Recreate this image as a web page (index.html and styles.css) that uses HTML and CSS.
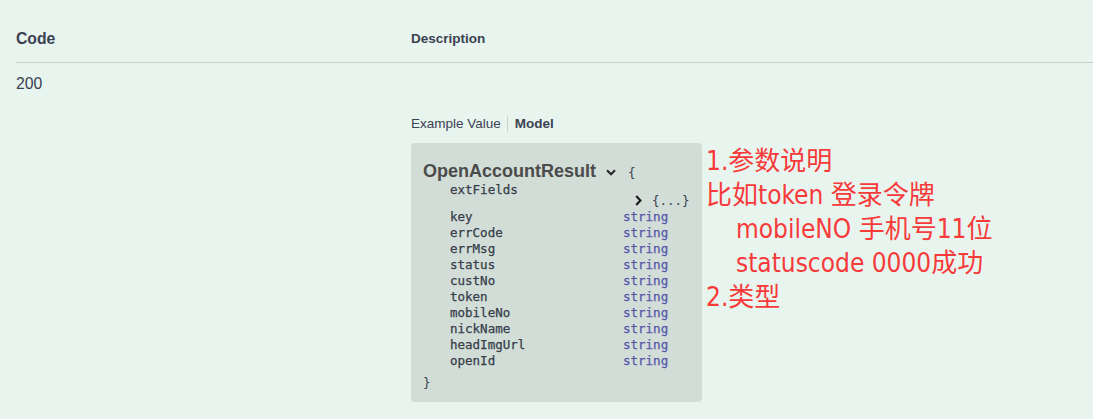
FILE: index.html
```html
<!DOCTYPE html>
<html lang="zh-CN">
<head>
<meta charset="utf-8">
<title>Responses</title>
<link rel="stylesheet" href="styles.css">
</head>
<body>
<div class="responses">
  <div class="resp-head">
    <div class="col-code head-code">Code</div>
    <div class="col-desc head-desc">Description</div>
  </div>
  <div class="resp-row">
    <div class="col-code code-val">200</div>
    <div class="col-desc">
      <div class="tabs">
        <span class="tab">Example Value</span>
        <span class="tab tab-active">Model</span>
      </div>
      <div class="model-wrap">
        <div class="model-box">
          <div class="model-title">
            <span class="title-text">OpenAccountResult</span>
            <svg class="chev-down" width="10" height="7" viewBox="0 0 10 7"><polyline points="1,1.2 5,5.2 9,1.2" fill="none" stroke="#2b2b2b" stroke-width="2.2"/></svg>
            <span class="brace">{</span>
          </div>
          <div class="props">
            <div class="pname pname-tall">extFields</div>
            <div class="ptype ptype-tall">
              <svg class="chev-right" width="7" height="11" viewBox="0 0 7 11"><polyline points="1.2,1 5.4,5.5 1.2,10" fill="none" stroke="#1e1e1e" stroke-width="2.2"/></svg>
              <span class="brace">{...}</span>
            </div>
            <div class="pname">key</div><div class="ptype">string</div>
            <div class="pname">errCode</div><div class="ptype">string</div>
            <div class="pname">errMsg</div><div class="ptype">string</div>
            <div class="pname">status</div><div class="ptype">string</div>
            <div class="pname">custNo</div><div class="ptype">string</div>
            <div class="pname">token</div><div class="ptype">string</div>
            <div class="pname">mobileNo</div><div class="ptype">string</div>
            <div class="pname">nickName</div><div class="ptype">string</div>
            <div class="pname">headImgUrl</div><div class="ptype">string</div>
            <div class="pname">openId</div><div class="ptype">string</div>
          </div>
          <div class="close-brace">}</div>
        </div>
        <div class="notes">
          <div class="note">1.参数说明</div>
          <div class="note">比如token 登录令牌</div>
          <div class="note note-indent">mobileNO 手机号11位</div>
          <div class="note note-indent">statuscode 0000成功</div>
          <div class="note">2.类型</div>
        </div>
      </div>
    </div>
  </div>
</div>
</body>
</html>
```

FILE: styles.css
```css
html, body {
  margin: 0;
  padding: 0;
  background: #e8f5ef;
}
body {
  width: 1093px;
  height: 419px;
  overflow: hidden;
  font-family: "Liberation Sans", Arial, sans-serif;
  color: #3b4151;
}
.responses {
  margin-left: 16px;
}
.resp-head {
  display: flex;
  padding: 27px 0 11px;
  line-height: 24px;
  border-bottom: 1px solid #c5d0cc;
}
.col-code {
  width: 395px;
  flex: none;
}
.col-desc {
  flex: 1;
}
.head-code {
  font-size: 15.75px;
  font-weight: bold;
}
.head-desc {
  font-size: 13.5px;
  font-weight: bold;
}
.resp-row {
  display: flex;
  padding-top: 9px;
}
.code-val {
  font-size: 15.75px;
  line-height: 24px;
}
.tabs {
  margin-top: 41.5px;
  font-size: 13.5px;
  line-height: 20px;
  display: flex;
  align-items: center;
}
.tab-active {
  font-weight: bold;
  margin-left: 6px;
  padding-left: 7px;
  border-left: 1px solid #c9d3cf;
  line-height: 16px;
}
.model-wrap {
  margin-top: 9px;
  display: flex;
  align-items: flex-start;
}
.model-box {
  width: 291px;
  box-sizing: border-box;
  flex: none;
  background: #d1ddd6;
  border-radius: 4px;
  padding: 18px 12px 11px;
}
.model-title {
  line-height: 21px;
  height: 21px;
  display: flex;
  align-items: baseline;
  white-space: nowrap;
}
.title-text {
  font-size: 18px;
  font-weight: bold;
  color: #4b4b4b;
}
.chev-down {
  margin-left: 10px;
  align-self: center;
  position: relative;
  top: 1px;
}
.brace {
  font-family: "DejaVu Sans Mono", monospace;
  font-size: 12.5px;
  color: #3b4151;
}
.model-title .brace {
  margin-left: 12px;
}
.props {
  margin-left: 27px;
  display: grid;
  grid-template-columns: 173px auto;
  font-family: "DejaVu Sans Mono", monospace;
  font-size: 12.5px;
  line-height: 16px;
}
.pname {
  color: #363c4a;
  white-space: nowrap;
  -webkit-text-stroke: 0.25px #363c4a;
}
.pname-tall {
  height: 27px;
}
.ptype {
  color: #55a;
  white-space: nowrap;
  -webkit-text-stroke: 0.25px #55a;
}
.ptype-tall {
  padding-top: 11px;
  height: 16px;
  display: flex;
  align-items: center;
  margin-left: 12px;
  -webkit-text-stroke: 0;
}
.chev-right {
  margin-right: 10px;
  flex: none;
}
.close-brace {
  margin-top: 6px;
  font-family: "DejaVu Sans Mono", monospace;
  font-size: 12.5px;
  line-height: 16px;
}
.notes {
  margin-left: 4px;
  margin-top: 1px;
  color: #f73a3a;
  font-family: "DejaVu Sans Condensed", "Liberation Sans", "Noto Sans CJK SC", sans-serif;
  font-stretch: condensed;
  font-size: 26px;
  white-space: nowrap;
}
.note {
  height: 34px;
  line-height: 34px;
}
.note-indent {
  padding-left: 30px;
}
```
